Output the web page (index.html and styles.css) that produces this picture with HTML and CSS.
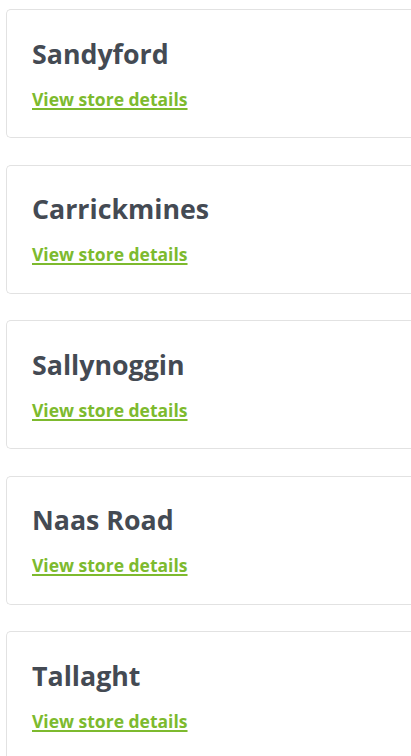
FILE: index.html
```html
<!DOCTYPE html>
<html>
<head>
<meta charset="utf-8">
<link rel="stylesheet" href="styles.css">
</head>
<body>
<div class="list">
  <div class="card"><h2 class="name">Sandyford</h2><a class="link" href="#">View store details</a></div>
  <div class="card"><h2 class="name">Carrickmines</h2><a class="link" href="#">View store details</a></div>
  <div class="card"><h2 class="name">Sallynoggin</h2><a class="link" href="#">View store details</a></div>
  <div class="card"><h2 class="name">Naas Road</h2><a class="link" href="#">View store details</a></div>
  <div class="card"><h2 class="name">Tallaght</h2><a class="link" href="#">View store details</a></div>
</div>
</body>
</html>
```
FILE: styles.css
```css
html, body { margin: 0; padding: 0; background: #fff; overflow: hidden; }
body { width: 411px; height: 756px; }
.list {
  display: flex;
  flex-direction: column;
  gap: 26.25px;
  padding: 9px 0 0 6px;
}
.card {
  border: 1px solid #e2e2e2;
  border-right: none;
  border-radius: 5px 0 0 5px;
  box-sizing: border-box;
  height: 129.25px;
  padding: 27.5px 25px 0;
}
.name {
  margin: 0;
  font-family: "Open Sans", sans-serif;
  font-weight: 700;
  font-size: 26.75px;
  line-height: 32px;
  color: #444a53;
}
.link {
  display: inline-block;
  margin-top: 18px;
  font-family: "Open Sans", sans-serif;
  font-weight: 700;
  font-size: 17.5px;
  line-height: 22px;
  color: #7dba2e;
  text-decoration: underline;
  text-decoration-thickness: 2px;
  text-underline-offset: 2px;
}
```
